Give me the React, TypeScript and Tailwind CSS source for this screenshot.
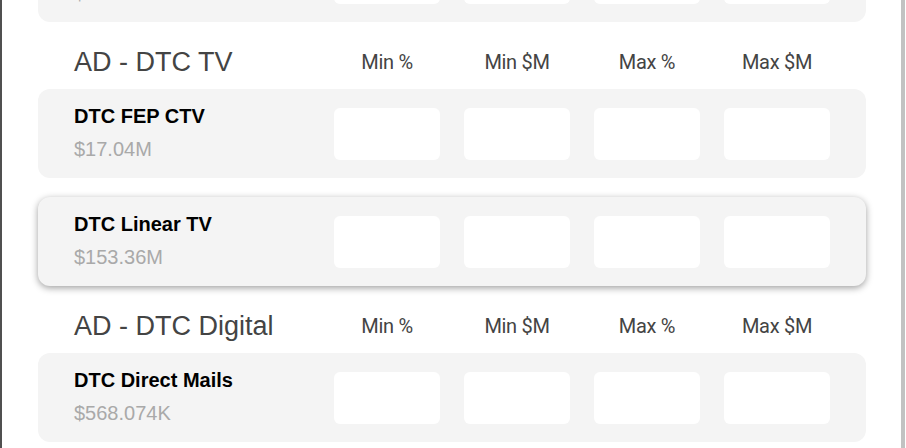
import React from "react";

type Row = { name: string; value: string; raised?: boolean };

const cols = ["Min %", "Min $M", "Max %", "Max $M"];

function Inputs() {
  return (
    <div className="flex gap-[24px]">
      {cols.map((c) => (
        <div key={c} className="w-[106px] h-[52px] rounded-[6px] bg-white" />
      ))}
    </div>
  );
}

function Card({ row }: { row: Row }) {
  return (
    <div
      className={
        "flex items-center h-[89px] rounded-[12px] bg-[#f4f4f4] pl-[36px] pr-[36px] " +
        (row.raised ? "shadow-[0_2px_7px_rgba(0,0,0,0.38)]" : "")
      }
    >
      <div className="flex-1 flex flex-col gap-[9px] pb-[3px]">
        <div className="text-[20px] leading-[24px] font-bold text-black [font-family:'Liberation_Sans',Arial,sans-serif]">
          {row.name}
        </div>
        <div className="text-[20px] leading-[24px] text-[#a9a9a9] [font-family:'Liberation_Sans',Arial,sans-serif]">
          {row.value}
        </div>
      </div>
      <Inputs />
    </div>
  );
}

function Header({ title }: { title: string }) {
  return (
    <div className="flex items-center h-[40px] mt-[20px] mb-[7px] pl-[36px] pr-[36px]">
      <div className="flex-1 text-[27px] text-[#444] [font-family:'Liberation_Sans',Arial,sans-serif]">
        {title}
      </div>
      <div className="flex gap-[24px]">
        {cols.map((c) => (
          <div
            key={c}
            className="w-[106px] text-center text-[20px] tracking-[-0.3px] text-[#444] [font-family:Roboto,sans-serif]"
          >
            {c}
          </div>
        ))}
      </div>
    </div>
  );
}

export default function App() {
  return (
    <div className="w-[906px] h-[448px] overflow-hidden bg-white flex">
      <div className="w-[2px] bg-[#505050]" />
      <div className="flex-1 pl-[36px] pr-[35px]">
        <div className="mt-[-67px]">
          <Card row={{ name: "DTC Paid Search", value: "$4.06M" }} />
          <Header title="AD - DTC TV" />
          <div className="flex flex-col gap-[19px]">
            <Card row={{ name: "DTC FEP CTV", value: "$17.04M" }} />
            <Card row={{ name: "DTC Linear TV", value: "$153.36M", raised: true }} />
          </div>
          <Header title="AD - DTC Digital" />
          <Card row={{ name: "DTC Direct Mails", value: "$568.074K" }} />
        </div>
      </div>
      <div className="w-[4px] bg-[#c2c2c2]" />
      <div className="w-[1px] bg-white" />
    </div>
  );
}
